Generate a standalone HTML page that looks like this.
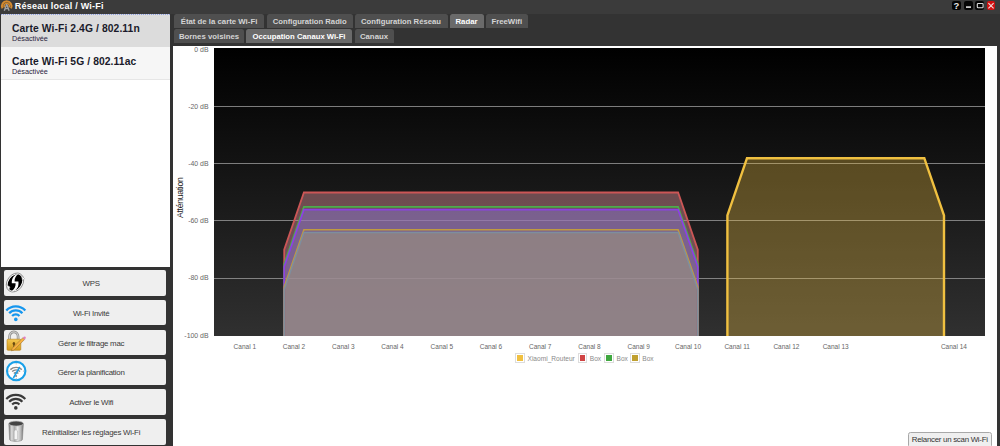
<!DOCTYPE html>
<html><head><meta charset="utf-8">
<style>
*{margin:0;padding:0;box-sizing:border-box}
html,body{width:1000px;height:446px;overflow:hidden;background:#333;font-family:"Liberation Sans",sans-serif}
.abs{position:absolute}
#title{position:absolute;left:0;top:0;width:1000px;height:14px;background:#3b3b3b;border-bottom:0}
#title .t{position:absolute;left:14.8px;top:1px;font-size:9px;letter-spacing:0.22px;font-weight:bold;color:#fff;line-height:10px;white-space:nowrap}
.wb{position:absolute;top:1.3px;width:8.5px;height:8.7px;border-radius:2px;background:#050505}
#left{position:absolute;left:1px;top:14px;width:168.5px;height:253px;background:#fff}
.item{position:absolute;left:0;width:168.5px;height:33px}
.item .h{position:absolute;left:11px;font-size:10.3px;letter-spacing:0.1px;font-weight:bold;color:#1a1a2a;white-space:nowrap;line-height:11px}
.item .s{position:absolute;left:11px;font-size:7.25px;color:#2a2440;white-space:nowrap;line-height:8px}
.btn{position:absolute;left:4px;width:162.3px;height:25.6px;background:#efefef;border-radius:2px}
.btn .l{position:absolute;left:12px;right:0;top:10.1px;text-align:center;font-size:7.9px;letter-spacing:-0.25px;color:#3a3a3a;white-space:nowrap;line-height:8px}
.btn svg{position:absolute;left:0;top:0}
.tab{position:absolute;height:13.6px;background:#4f4f4f;border-radius:2.5px 2.5px 0 0;color:#d4d4d4;font-size:7.8px;font-weight:bold;text-align:center;line-height:13.6px;padding-top:0.7px;white-space:nowrap}
.tab.a{background:#6a6a6a;color:#fff}
#panel{position:absolute;left:173px;top:46px;width:823.8px;height:400px;background:#fff}
.yl{position:absolute;left:150px;width:58.5px;text-align:right;font-size:6.9px;color:#666;line-height:10px;white-space:nowrap}
.xl{position:absolute;top:341.5px;width:60px;text-align:center;font-size:6.5px;color:#666;line-height:10px;white-space:nowrap}
.lg{position:absolute;top:353.5px;font-size:6.6px;color:#8a8a8a;line-height:10px;white-space:nowrap}
</style></head><body>
<div id="title"><div class="t">Réseau local / Wi-Fi</div>
<svg class="abs" style="left:0;top:0" width="14" height="13" viewBox="0 0 14 13">
 <path d="M2.4,8.4 A4.8,4.9 0 1 1 11.0,8.4" fill="none" stroke="#d48a2e" stroke-width="2"/>
 <path d="M4.5,7.4 A2.6,2.6 0 1 1 8.9,7.4" fill="none" stroke="#d48a2e" stroke-width="1.5"/>
 <path d="M6.7,4.2 L4.3,10.8 M6.7,4.2 L9.1,10.8 M5.2,8.6 H8.2" stroke="#a0a0a0" stroke-width="1.4" fill="none"/>
</svg>
<div class="wb" style="left:952.4px"></div><div class="wb" style="left:964px"></div><div class="wb" style="left:975.3px"></div><div class="wb" style="left:986.8px;background:#d01010"></div>
<svg class="abs" style="left:945px;top:0" width="55" height="13" viewBox="0 0 55 13">
 <text x="11.5" y="8.8" font-family="Liberation Sans" font-weight="bold" font-size="9.5" fill="#e8e8e8" text-anchor="middle">?</text>
 <rect x="21" y="6.3" width="5" height="1.6" fill="#ddd"/>
 <rect x="32.3" y="3.5" width="5.8" height="4.2" rx="0.8" fill="none" stroke="#ddd" stroke-width="1.1"/>
 <path d="M43.4,3.2 L48.6,8.4 M48.6,3.2 L43.4,8.4" stroke="#f4dede" stroke-width="1.1"/>
</svg>
</div>
<div id="left">
 <div class="abs" style="left:0;top:0;width:168.5px;height:1px;border-top:1px dotted #8c9ee0;z-index:2"></div>
 <div class="item" style="top:0;background:#dcdcdc"><div class="h" style="top:9px">Carte Wi-Fi 2.4G / 802.11n</div><div class="s" style="top:21.2px">Désactivée</div></div>
 <div class="item" style="top:33px;background:#f6f6f6;border-bottom:1px solid #e6e6e6;height:32.5px"><div class="h" style="top:9.1px">Carte Wi-Fi 5G / 802.11ac</div><div class="s" style="top:20.9px">Désactivée</div></div>
</div>
<div class="btn" style="top:270.0px"><svg width="30" height="26" viewBox="0 0 30 26"><g transform="rotate(35 11 12.5)"><ellipse cx="11" cy="12.5" rx="7.8" ry="10.2" fill="#fff" stroke="#8a8a8a" stroke-width="0.9"/>
   <ellipse cx="11" cy="12.5" rx="6.4" ry="8.9" fill="#000"/></g>
   <path d="M15,3.2 C10,4.8 7.6,8 7.8,13.2 L11.6,13.2 C11.8,16.2 10.6,19.2 7,21.8 C13.5,20.4 15,16.5 14.4,11.4 L10.6,11.4 C10.4,8 12,5.5 15,3.2 Z" fill="#fff"/>
   <path d="M17.5,5.5 L20.5,8.5 L18.5,10.5Z M2,14.5 L4.5,20.5 L6,17Z" fill="#fff" stroke="#999" stroke-width="0.6"/></svg><div class="l">WPS</div></div>
<div class="btn" style="top:299.8px"><svg width="30" height="26" viewBox="0 0 30 26"><path d="M2.29,10.53 A13.0,13.0 0 0 1 21.31,10.53" fill="none" stroke="#1596ee" stroke-width="2.3" stroke-linecap="butt"/><path d="M5.22,13.26 A9.0,9.0 0 0 1 18.38,13.26" fill="none" stroke="#1596ee" stroke-width="2.3" stroke-linecap="butt"/><path d="M8.14,15.99 A5.0,5.0 0 0 1 15.46,15.99" fill="none" stroke="#1596ee" stroke-width="2.3" stroke-linecap="butt"/><circle cx="11.8" cy="19.4" r="1.8" fill="#1596ee"/></svg><div class="l">Wi-Fi Invité</div></div>
<div class="btn" style="top:329.6px"><svg width="30" height="26" viewBox="0 0 30 26"><defs><linearGradient id="lg1" x1="0" y1="0" x2="0" y2="1"><stop offset="0" stop-color="#f4c850"/><stop offset="1" stop-color="#d49a1c"/></linearGradient></defs>
   <path d="M5.5,9.5 V6.8 A4.3,4.9 0 0 1 14.1,6.8 V9.5" fill="none" stroke="#8c8c8c" stroke-width="2.6"/>
   <path d="M5.5,9.5 V6.8 A4.3,4.9 0 0 1 14.1,6.8 V9.5" fill="none" stroke="#d0d0d0" stroke-width="1.2"/>
   <rect x="3" y="9.2" width="13.8" height="11.1" rx="1" fill="url(#lg1)" stroke="#b88010" stroke-width="0.6"/>
   <ellipse cx="9.9" cy="13.5" rx="1.3" ry="1.5" fill="#6a4a10"/><rect x="9.3" y="14" width="1.2" height="3" fill="#6a4a10"/>
   <path d="M7.4,20.9 L8.3,18.2 L18.8,7.7 L20.6,9.5 L10.1,20 Z" fill="#f8b040" stroke="#8a6a30" stroke-width="0.5"/>
   <path d="M18.8,7.7 L19.8,6.7 A1.3,1.3 0 0 1 21.6,8.5 L20.6,9.5Z" fill="#e080c0"/></svg><div class="l">Gérer le filtrage mac</div></div>
<div class="btn" style="top:359.4px"><svg width="30" height="26" viewBox="0 0 30 26"><circle cx="12.2" cy="12.1" r="9.2" fill="#fff" stroke="#1aa0e8" stroke-width="2.1"/>
   <path d="M12.2,4.2 V5.4 M12.2,18.8 V20 M4.3,12.1 H5.5 M18.9,12.1 H20.1" stroke="#aaa" stroke-width="0.9"/><path d="M6.35,10.61 A8.6,8.6 0 0 1 17.85,10.61" fill="none" stroke="#8a8a8a" stroke-width="1.4" stroke-linecap="butt"/><path d="M8.09,12.54 A6.0,6.0 0 0 1 16.11,12.54" fill="none" stroke="#8a8a8a" stroke-width="1.4" stroke-linecap="butt"/><path d="M9.82,14.47 A3.4,3.4 0 0 1 14.38,14.47" fill="none" stroke="#8a8a8a" stroke-width="1.4" stroke-linecap="butt"/><circle cx="12.1" cy="17.0" r="1.0" fill="#8a8a8a"/><path d="M9.3,19 L15.8,8" stroke="#1aa0e8" stroke-width="1.5"/></svg><div class="l">Gérer la planification</div></div>
<div class="btn" style="top:389.2px"><svg width="30" height="26" viewBox="0 0 30 26"><path d="M2.29,10.03 A13.0,13.0 0 0 1 21.31,10.03" fill="none" stroke="#3a3a3a" stroke-width="2.1" stroke-linecap="butt"/><path d="M5.22,12.76 A9.0,9.0 0 0 1 18.38,12.76" fill="none" stroke="#3a3a3a" stroke-width="2.1" stroke-linecap="butt"/><path d="M8.14,15.49 A5.0,5.0 0 0 1 15.46,15.49" fill="none" stroke="#3a3a3a" stroke-width="2.1" stroke-linecap="butt"/><circle cx="11.8" cy="18.9" r="1.8" fill="#3a3a3a"/></svg><div class="l">Activer le Wifi</div></div>
<div class="btn" style="top:419.0px"><svg width="30" height="26" viewBox="0 0 30 26"><defs><linearGradient id="tg" x1="0" x2="1"><stop offset="0" stop-color="#777"/><stop offset="0.2" stop-color="#ddd"/><stop offset="0.4" stop-color="#aaa"/><stop offset="0.6" stop-color="#e8e8e8"/><stop offset="0.8" stop-color="#bbb"/><stop offset="1" stop-color="#777"/></linearGradient></defs>
   <path d="M4.8,4.8 L5.6,20.6 A6.4,1.8 0 0 0 18.4,20.6 L19.4,4.8 Z" fill="url(#tg)" stroke="#777" stroke-width="0.5"/>
   <ellipse cx="12.1" cy="4.6" rx="7.3" ry="2.5" fill="#444" stroke="#bbb" stroke-width="0.7"/>
   <path d="M10.2,12 L12,10.5 L13.6,12 V20.5 H10.2Z" fill="#f4f4f4" stroke="#999" stroke-width="0.4"/></svg><div class="l">Réinitialiser les réglages Wi-Fi</div></div>

<div class="tab" style="left:174px;top:14px;width:90px">État de la carte Wi-Fi</div>
<div class="tab" style="left:266.5px;top:14px;width:86.5px;font-size:7.7px">Configuration Radio</div>
<div class="tab" style="left:354.5px;top:14px;width:93px;font-size:7.7px">Configuration Réseau</div>
<div class="tab a" style="left:449.5px;top:14px;width:34px">Radar</div>
<div class="tab" style="left:485.5px;top:14px;width:42.5px">FreeWifi</div>
<div class="tab" style="left:174px;top:29px;width:70px">Bornes voisines</div>
<div class="tab a" style="left:246px;top:29px;width:106px;font-size:7.7px">Occupation Canaux Wi-Fi</div>
<div class="tab" style="left:354.5px;top:29px;width:39px">Canaux</div>

<div id="panel"></div>
<svg class="abs" style="left:0;top:0" width="1000" height="446">
<defs><linearGradient id="bg" x1="0" y1="0" x2="0" y2="1"><stop offset="0" stop-color="#000"/><stop offset="1" stop-color="#303030"/></linearGradient></defs>
<rect x="214" y="48" width="771" height="288" fill="url(#bg)"/>
<rect x="214" y="106" width="771" height="1" fill="#9a9a9a" fill-opacity="0.8"/><rect x="214" y="163" width="771" height="1" fill="#9a9a9a" fill-opacity="0.8"/><rect x="214" y="220" width="771" height="1" fill="#9a9a9a" fill-opacity="0.8"/><rect x="214" y="278" width="771" height="1" fill="#9a9a9a" fill-opacity="0.8"/>
<polygon points="284.2,336.0 284.2,249.7 303.9,192.5 678.1,192.5 697.8,249.7 697.8,336.0" fill="#c48088" fill-opacity="0.5"/><polygon points="284.2,336.0 284.2,264.0 303.9,206.8 678.1,206.8 697.8,264.0 697.8,336.0" fill="#40a040" fill-opacity="0.04"/><polygon points="284.2,336.0 284.2,266.9 303.9,209.7 678.1,209.7 697.8,266.9 697.8,336.0" fill="#8670cc" fill-opacity="0.5"/><polygon points="284.2,336.0 284.2,286.9 303.9,229.7 678.1,229.7 697.8,286.9 697.8,336.0" fill="#c0a030" fill-opacity="0.04"/><polygon points="284.2,336.0 284.2,289.7 303.9,232.5 678.1,232.5 697.8,289.7 697.8,336.0" fill="#9e9c7e" fill-opacity="0.5"/><polyline points="284.2,336.0 284.2,249.7 303.9,192.5 678.1,192.5 697.8,249.7 697.8,336.0" fill="none" stroke="#cc5656" stroke-width="1.8"/><polyline points="284.2,336.0 284.2,264.0 303.9,206.8 678.1,206.8 697.8,264.0 697.8,336.0" fill="none" stroke="#4cac4c" stroke-width="1.7"/><polyline points="284.2,336.0 284.2,266.9 303.9,209.7 678.1,209.7 697.8,266.9 697.8,336.0" fill="none" stroke="#8c40e4" stroke-width="1.7"/><polyline points="284.2,336.0 284.2,286.9 303.9,229.7 678.1,229.7 697.8,286.9 697.8,336.0" fill="none" stroke="#c09a40" stroke-width="1.6"/><polyline points="284.2,336.0 284.2,289.7 303.9,232.5 678.1,232.5 697.8,289.7 697.8,336.0" fill="none" stroke="#7e8e9e" stroke-width="1.5"/><polygon points="727.4,336.0 727.4,215.4 747.0,158.2 924.3,158.2 944.0,215.4 944.0,336.0" fill="#f0c040" fill-opacity="0.32"/><polyline points="727.4,336.0 727.4,215.4 747.0,158.2 924.3,158.2 944.0,215.4 944.0,336.0" fill="none" stroke="#f0c040" stroke-width="2.4"/>
</svg>
<div class="yl" style="top:44.5px">0 dB</div><div class="yl" style="top:101.7px">-20 dB</div><div class="yl" style="top:158.9px">-40 dB</div><div class="yl" style="top:216.1px">-60 dB</div><div class="yl" style="top:273.3px">-80 dB</div><div class="yl" style="top:330.5px">-100 dB</div>
<div class="xl" style="left:214.8px">Canal 1</div><div class="xl" style="left:264.0px">Canal 2</div><div class="xl" style="left:313.3px">Canal 3</div><div class="xl" style="left:362.5px">Canal 4</div><div class="xl" style="left:411.8px">Canal 5</div><div class="xl" style="left:461.0px">Canal 6</div><div class="xl" style="left:510.2px">Canal 7</div><div class="xl" style="left:559.5px">Canal 8</div><div class="xl" style="left:608.7px">Canal 9</div><div class="xl" style="left:658.0px">Canal 10</div><div class="xl" style="left:707.2px">Canal 11</div><div class="xl" style="left:756.4px">Canal 12</div><div class="xl" style="left:805.7px">Canal 13</div><div class="xl" style="left:923.9px">Canal 14</div>
<div class="abs" style="left:515.2px;top:353.2px;width:9.5px;height:9.5px;border:1px solid #ddd;background:#fff"><div style="position:absolute;left:1px;top:1px;right:1px;bottom:1px;background:#f0c040"></div></div><div class="lg" style="left:527.5px">Xiaomi_Routeur</div><div class="abs" style="left:577.5px;top:353.2px;width:9.5px;height:9.5px;border:1px solid #ddd;background:#fff"><div style="position:absolute;left:1px;top:1px;right:1px;bottom:1px;background:#d04444"></div></div><div class="lg" style="left:589.8px">Box</div><div class="abs" style="left:604.2px;top:353.2px;width:9.5px;height:9.5px;border:1px solid #ddd;background:#fff"><div style="position:absolute;left:1px;top:1px;right:1px;bottom:1px;background:#40a840"></div></div><div class="lg" style="left:616.5px">Box</div><div class="abs" style="left:630px;top:353.2px;width:9.5px;height:9.5px;border:1px solid #ddd;background:#fff"><div style="position:absolute;left:1px;top:1px;right:1px;bottom:1px;background:#c0a030"></div></div><div class="lg" style="left:642.3px">Box</div>
<div class="abs" style="left:174.5px;top:218.2px;width:42px;height:10px;transform-origin:0 0;transform:rotate(-90deg);font-size:8.7px;letter-spacing:-0.32px;color:#222;line-height:10px;white-space:nowrap">Atténuation</div>
<div class="abs" style="left:907.5px;top:432px;width:84.5px;height:16px;background:#efefef;border:1px solid #a8a8a8;border-radius:2.5px;font-size:7.9px;letter-spacing:-0.28px;color:#333;line-height:14px;text-align:center;white-space:nowrap">Relancer un scan Wi-Fi</div>
</body></html>
